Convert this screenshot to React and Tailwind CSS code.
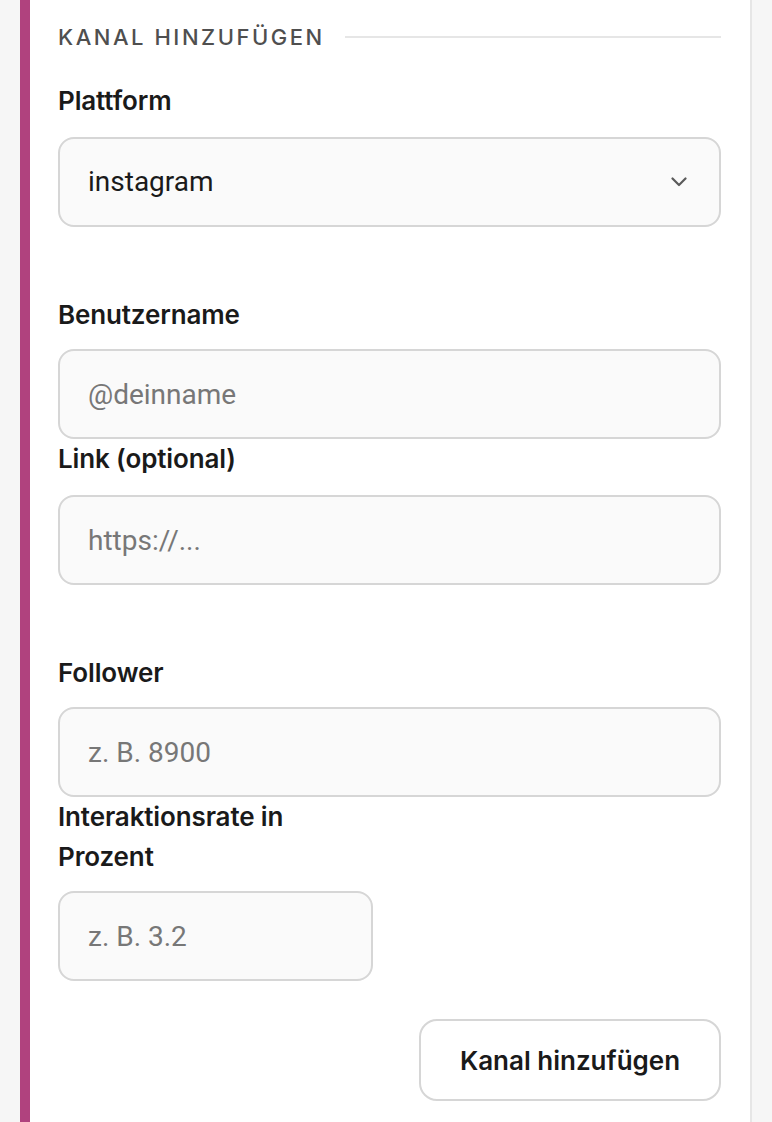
import React from 'react'

const labelCls =
  "block text-[26px] leading-[40px] font-semibold tracking-[-0.005em] text-[#1a1a1a] font-['Inter',sans-serif]"
const inputCls =
  "w-full h-[90px] rounded-[16px] border-2 border-[#d6d6d6] bg-[#fafafa] px-[28px] text-[28px] text-[#1a1a1a] placeholder:text-[#777] font-['Roboto',sans-serif] outline-none"

function Field({ label, placeholder, className = '', gap = 'mt-[14px]' }) {
  return (
    <div className={className}>
      <label className={labelCls}>{label}</label>
      <input type="text" placeholder={placeholder} className={inputCls + ' ' + gap} />
    </div>
  )
}

export default function App() {
  return (
    <div className="h-[1122px] overflow-hidden bg-[#f6f6f6] pl-[20px] pr-[20px]">
      <div className="h-full bg-white border-l-[10px] border-[#b0427e] border-r-2 border-r-[#e6e6e6] pl-[28px] pr-[29px] pt-[23px]">
        {/* Section heading */}
        <div className="flex items-center gap-[20px]">
          <h3 className="text-[22px] leading-[28px] font-medium tracking-[0.115em] text-[#4f4f4f] font-['Inter',sans-serif] whitespace-nowrap">
            KANAL HINZUFÜGEN
          </h3>
          <div className="flex-1 h-[2px] bg-[#e6e6e6]" />
        </div>

        {/* Platform */}
        <div className="mt-[30px]">
          <label className={labelCls}>Plattform</label>
          <div className="relative mt-[16px]">
            <select className="w-full h-[90px] appearance-none rounded-[16px] border-2 border-[#d6d6d6] bg-[#fafafa] px-[28px] text-[28px] text-[#1a1a1a] font-['Roboto',sans-serif] outline-none">
              <option>instagram</option>
              <option>tiktok</option>
              <option>youtube</option>
            </select>
            <svg
              className="pointer-events-none absolute right-[34px] top-1/2 -translate-y-1/2"
              width="16"
              height="10"
              viewBox="0 0 16 10"
              fill="none"
            >
              <path d="M1.5 1.5 L8 8 L14.5 1.5" stroke="#5a5a5a" strokeWidth="2.2" strokeLinecap="round" strokeLinejoin="round" />
            </svg>
          </div>
        </div>

        {/* Username + link */}
        <div className="mt-[68px]">
          <Field label="Benutzername" placeholder="@deinname" />
          <Field label="Link (optional)" placeholder="https://..." gap="mt-[16px]" />
        </div>

        {/* Stats */}
        <div className="mt-[68px]">
          <Field label="Follower" placeholder="z. B. 8900" />
          <Field label="Interaktionsrate in Prozent" placeholder="z. B. 3.2" className="w-[315px]" />
        </div>

        <div className="mt-[38px] flex justify-end">
          <button className="h-[82px] w-[302px] rounded-[18px] border-2 border-[#d6d6d6] bg-white text-[26px] font-semibold text-[#1a1a1a] font-['Inter',sans-serif]">
            Kanal hinzufügen
          </button>
        </div>
      </div>
    </div>
  )
}
